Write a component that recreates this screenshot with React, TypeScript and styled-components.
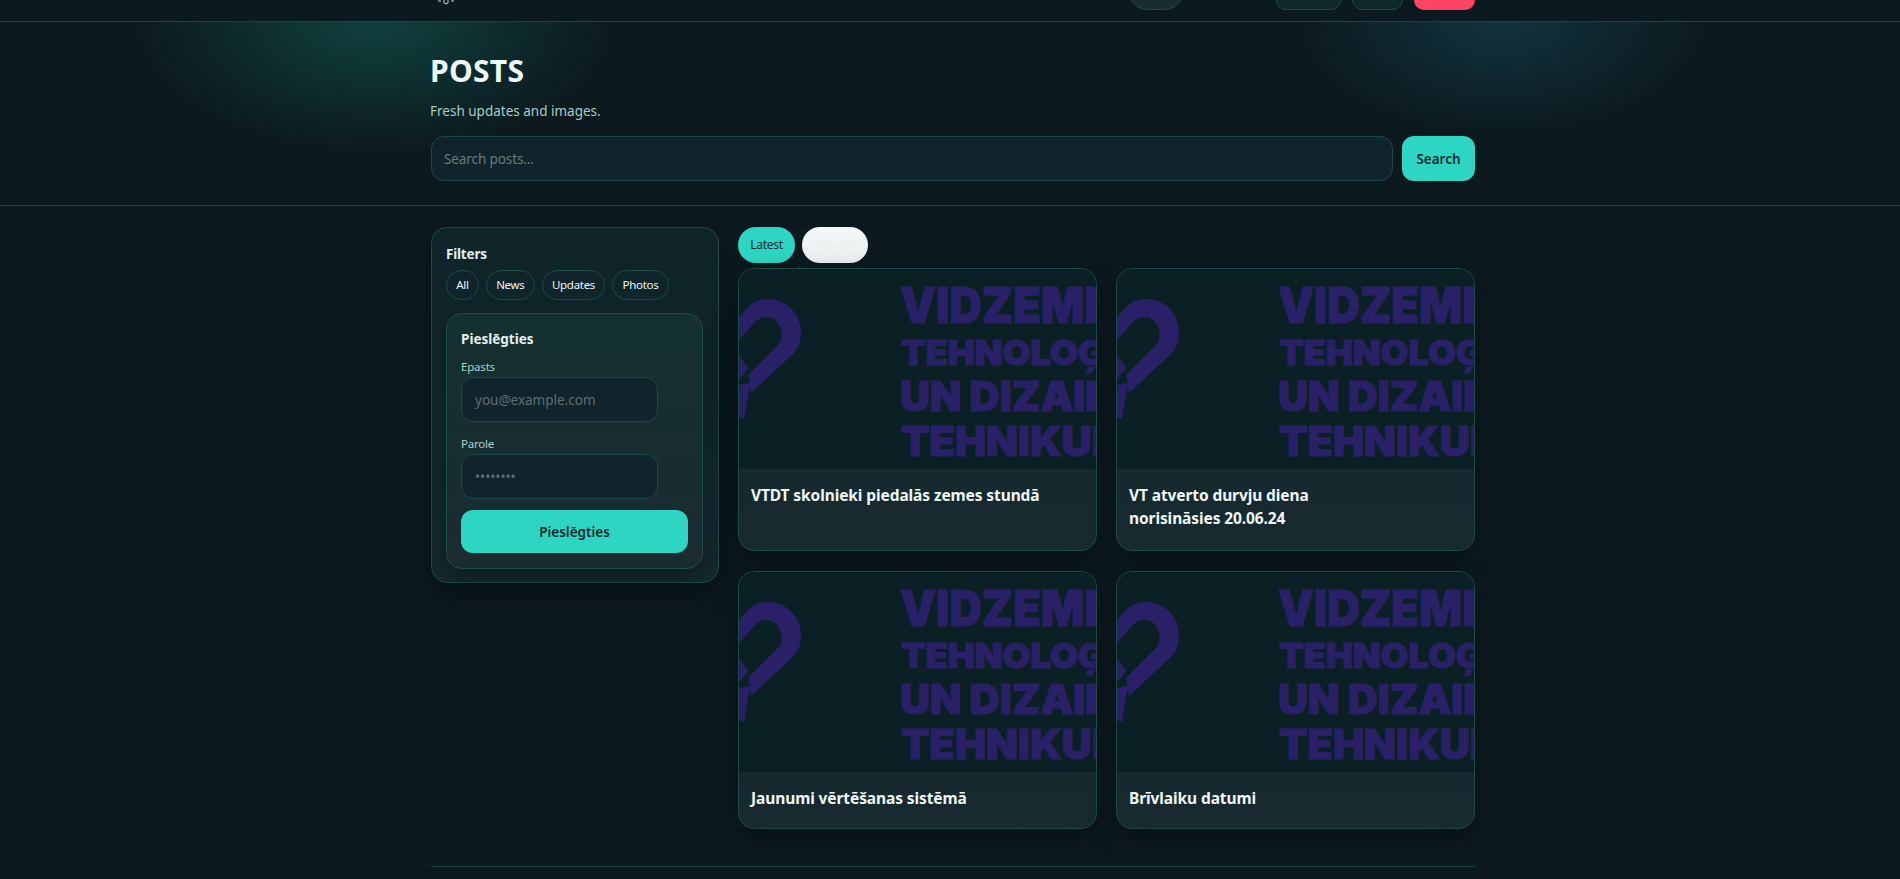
import React from 'react';
import styled, { createGlobalStyle } from 'styled-components';

const Global = createGlobalStyle`
  html, body { margin: 0; padding: 0; height: 100%; overflow: hidden; }
  body { background: #0c1a1f; color: #e6f4f1; font-family: "Noto Sans", "Open Sans", "Liberation Sans", sans-serif; }
  * { box-sizing: border-box; }
`;
const Page = styled.div`height: 879px; overflow: hidden;`;
const Wrap = styled.div`width: 1044px; margin-left: 431px;`;
const Header = styled.header`height: 22px; overflow: hidden; border-bottom: 1px solid #1b4345; background: #0a1a20;`;
const HeaderRow = styled(Wrap)`height: 21px; display: flex; align-items: flex-end; padding-bottom: 11px; position: relative;`;
const Logo = styled.svg`position: absolute; left: 4px; top: 0; width: 22px; height: 5px;`;
const HeaderBtn = styled.div<{ $w: number; $ml: number; $kind?: string }>`
  flex: none; width: ${p => p.$w}px; height: 40px; margin-left: ${p => p.$ml}px;
  border-radius: ${p => (p.$kind === 'pill' ? 20 : 10)}px;
  background: ${p => (p.$kind === 'red' ? '#ff4365' : p.$kind === 'pill' ? 'linear-gradient(#142b30,#1a2c32)' : '#10282c')};
  border: ${p => (p.$kind === 'red' ? 'none' : '1px solid #1c4a4a')};
`;
const Hero = styled.section`
  height: 184px; border-bottom: 1px solid #1b4345;
  background:
    radial-gradient(240px 130px at 375px 0, rgba(20,96,88,.55), transparent 100%),
    radial-gradient(205px 112px at 1502px 0, rgba(22,68,84,.6), transparent 100%),
    #0c1a1f;
`;
const HeroInner = styled(Wrap)`padding-top: 31px;`;
const H1 = styled.h1`margin: 0 0 0 -1px; font-size: 30px; line-height: 36px; font-weight: 700; color: #eef8f6; letter-spacing: .3px;`;
const Sub = styled.p`margin: 12px 0 0 -1px; font-size: 13.5px; line-height: 20px; color: #a6cdc7;`;
const SearchRow = styled.div`display: flex; gap: 9px; margin-top: 15px;`;
const SearchBox = styled.div`flex: 1; height: 45px; border-radius: 13px; border: 1px solid #1a4a4c; background: #11242b; padding: 0 12px; display: flex; align-items: center; font-size: 13.5px; color: #6b7a7c; letter-spacing: -.1px;`;
const Accent = styled.button`border: none; background: #2dd6c2; color: #0c2a2c; font-family: inherit; font-weight: 600; border-radius: 12px; padding: 0;`;
const SearchBtn = styled(Accent)`width: 73px; height: 45px; font-size: 13.5px;`;
const Main = styled(Wrap)`display: grid; grid-template-columns: 288px 737px; column-gap: 19px; padding-top: 21px; align-items: start;`;
const Side = styled.aside`height: 356px; border: 1px solid #1a4a4a; border-radius: 16px; padding: 17px 14px 0; background: linear-gradient(#0f2429,#14292e); box-shadow: 0 10px 28px rgba(0,0,0,.35);`;
const SideTitle = styled.div`font-size: 13.5px; line-height: 18px; font-weight: 700; color: #e3f1ee; letter-spacing: -.2px;`;
const Chips = styled.div`display: flex; gap: 7px; margin-top: 7px;`;
const Chip = styled.div`height: 30px; padding: 0 9.25px 1px; border: 1px solid #1c4a4a; border-radius: 15px; display: flex; align-items: center; font-size: 11.5px; letter-spacing: -.3px; color: #eef6f4;`;
const Login = styled.div`display: flex; flex-direction: column; align-items: flex-start; margin-top: 13px; height: 256px; width: 257px; border: 1px solid #1c4c4c; border-radius: 16px; padding: 16px 14px 0; background: linear-gradient(#14302f,#1b2b32); box-shadow: 0 8px 22px rgba(0,0,0,.3);`;
const LoginTitle = styled(SideTitle)`letter-spacing: 0;`;
const Label = styled.div`font-size: 11.5px; line-height: 16px; color: #a9d0c9; letter-spacing: -.2px; margin-top: 11px;`;
const Field = styled.div`width: 197px; height: 45px; border: 1px solid #1a4a4c; border-radius: 12px; background: #11242b; margin: 2px 0 3px; padding: 0 13px; display: flex; align-items: center; font-size: 13.5px; color: #5f6f72;`;
const LoginBtn = styled(Accent)`display: block; width: 227px; height: 43px; font-size: 13.5px; margin-top: 8px;`;
const Tabs = styled.div`display: flex; gap: 7px; height: 36px;`;
const Tab = styled.div<{ $active?: boolean }>`
  height: 36px; padding-bottom: 1px; width: ${p => (p.$active ? 57 : 66)}px; border-radius: 18px; display: flex; align-items: center; justify-content: center; font-size: 12px; letter-spacing: -.3px;
  background: ${p => (p.$active ? '#2dd6c2' : 'linear-gradient(#f6f8f8,#e8eded)')};
  color: ${p => (p.$active ? '#0c2a2c' : '#eaf0ef')};
`;
const Grid = styled.div`display: grid; grid-template-columns: 359px 359px; column-gap: 19px; margin-top: 5px;`;
const Card = styled.article<{ $h: number }>`height: ${p => p.$h}px; margin-bottom: 20px; border: 1px solid #1a4a4a; border-radius: 16px; overflow: hidden; background: linear-gradient(#16272d,#172a30); box-shadow: 0 10px 24px rgba(0,0,0,.35);`;
const Pic = styled.svg`display: block; width: 100%; height: 200px; background: #0a2025;`;
const Caption = styled.h3`margin: 0; padding: 15px 12px 0; font-size: 15.5px; line-height: 23px; font-weight: 700; color: #eef7f5; letter-spacing: -.1px; white-space: pre-line;`;
const Foot = styled(Wrap)`border-top: 1px solid #164240; margin-top: 17px;`;

const PicArt = () => (
  <Pic viewBox="0 0 357 200" preserveAspectRatio="xMinYMin slice">
    <g fill="#2a2068">
      <path d="M0 48 L9 38 C15 32 22 30 29 30 C48 30 62 45 62 64 C62 72 59 80 54 85 L12 124 L10 115 L3 114 L0 115 L0 116 L11 114 L5 150 L0 148 Z" />
      <path fill="#0a2025" d="M9 106 L40 75 C46 68 42 48 28 48 C22 48 19 50 15 54 L0 71 L0 115 L11 114 Z" />
      <path d="M0 86 L8 97 L9 100 L0 110 Z" />
    </g>
    <g fill="#2a2068" stroke="#2a2068" strokeWidth="1" fontFamily="Inter, Lato, sans-serif" fontWeight="900">
      <text x="161" y="54" fontSize="50" textLength="212" lengthAdjust="spacingAndGlyphs">VIDZEME</text>
      <text x="162" y="96" fontSize="34" textLength="262" lengthAdjust="spacingAndGlyphs">TEHNOLOĢIJU</text>
      <text x="161" y="142" fontSize="41" textLength="250" lengthAdjust="spacingAndGlyphs">UN DIZAINA</text>
      <text x="162" y="187" fontSize="41" textLength="258" lengthAdjust="spacingAndGlyphs">TEHNIKUMS</text>
    </g>
  </Pic>
);

const posts = [
  { t: 'VTDT skolnieki piedalās zemes stundā', h: 283 },
  { t: 'VT atverto durvju diena\nnorisināsies 20.06.24', h: 283 },
  { t: 'Jaunumi vērtēšanas sistēmā', h: 258 },
  { t: 'Brīvlaiku datumi', h: 258 },
];

export default function App() {
  return (
    <Page>
      <Global />
      <Header>
        <HeaderRow>
          <Logo viewBox="0 0 22 5"><path d="M3 1h3M9 0v3l2 1 2-1V0M16 1h3" stroke="#c9d6d5" strokeWidth="1" fill="none" /></Logo>
          <HeaderBtn $kind="pill" $w={56} $ml={697} />
          <HeaderBtn $w={65} $ml={92} />
          <HeaderBtn $w={51} $ml={11} />
          <HeaderBtn $kind="red" $w={61} $ml={11} />
        </HeaderRow>
      </Header>
      <Hero>
        <HeroInner>
          <H1>POSTS</H1>
          <Sub>Fresh updates and images.</Sub>
          <SearchRow>
            <SearchBox>Search posts...</SearchBox>
            <SearchBtn>Search</SearchBtn>
          </SearchRow>
        </HeroInner>
      </Hero>
      <Main>
        <Side>
          <SideTitle>Filters</SideTitle>
          <Chips>
            <Chip>All</Chip><Chip>News</Chip><Chip>Updates</Chip><Chip>Photos</Chip>
          </Chips>
          <Login>
            <LoginTitle>Pieslēgties</LoginTitle>
            <Label>Epasts</Label>
            <Field>you@example.com</Field>
            <Label>Parole</Label>
            <Field>••••••••</Field>
            <LoginBtn>Pieslēgties</LoginBtn>
          </Login>
        </Side>
        <div>
          <Tabs>
            <Tab $active>Latest</Tab>
            <Tab>Popular</Tab>
          </Tabs>
          <Grid>
            {posts.map(p => (
              <Card key={p.t} $h={p.h}>
                <PicArt />
                <Caption>{p.t}</Caption>
              </Card>
            ))}
          </Grid>
        </div>
      </Main>
      <Foot />
    </Page>
  );
}
